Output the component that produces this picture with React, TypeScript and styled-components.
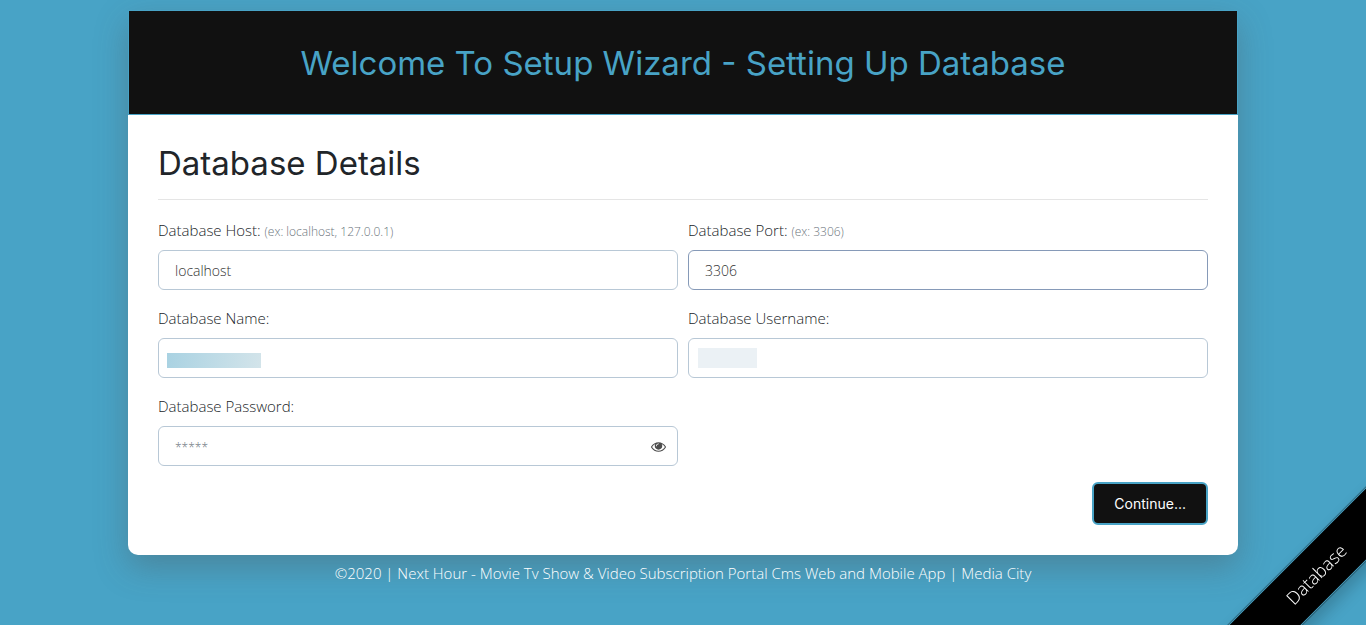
import React, { useState } from "react";
import styled, { createGlobalStyle } from "styled-components";

const blue = "#48a3c6";
const display = `Inter, "Liberation Sans", sans-serif`;
const body = `"Open Sans", "Noto Sans", sans-serif`;

const Global = createGlobalStyle`
  *, *::before, *::after { box-sizing: border-box; }
  body {
    margin: 0;
    min-height: 100vh;
    background: ${blue};
    color: #212529;
    font: 300 15px/24px ${body};
  }
`;

const Container = styled.div`
  max-width: 1140px;
  margin: 0 auto;
  padding: 10px 15px 32px;
`;

const Card = styled.main`
  background: #fff;
  border-radius: 10px;
  box-shadow: 0 12px 32px rgba(77, 77, 77, 0.35);
`;

const Header = styled.header`
  padding: 32px 20px 31px;
  background: #111;
  border: 1px solid ${blue};
  text-align: center;
`;

const Title = styled.h1`
  margin: 0;
  color: ${blue};
  font: 400 33px/40px ${display};
`;

const Form = styled.form`
  padding: 28px 30px 30px;
`;

const SectionTitle = styled.h2`
  margin: 0 0 16px;
  font: 400 33px/40px ${display};
`;

const Rule = styled.hr`
  margin: 0 0 18px;
  border: 0;
  border-top: 1px solid rgba(0, 0, 0, 0.1);
`;

const Fields = styled.div`
  display: grid;
  grid-template-columns: 1fr 1fr;
  gap: 16px 10px;
`;

const Field = styled.div`
  display: flex;
  flex-direction: column;
  gap: 8px;
`;

const Label = styled.label`
  height: 24px;

  small {
    color: #6c757d;
    font-size: 12px;
  }
`;

const Control = styled.div`
  display: flex;
  position: relative;
`;

const Input = styled.input<{ $active?: boolean }>`
  width: 100%;
  height: 40px;
  padding: 0 16px;
  border: 1px solid ${(p) => (p.$active ? "#869ab8" : "#b8c8d6")};
  border-radius: 6px;
  background: #fff;
  color: #333;
  font: 300 14px/24px ${body};
  outline: 0;
  &::placeholder { color: #6c757d; font-size: 12px; opacity: 1; }
`;

const Redaction = styled.span<{ $tone: "blue" | "grey" }>`
  position: absolute;
  top: ${(p) => (p.$tone === "blue" ? 15 : 10)}px;
  left: ${(p) => (p.$tone === "blue" ? 9 : 10)}px;
  width: ${(p) => (p.$tone === "blue" ? 94 : 59)}px;
  height: ${(p) => (p.$tone === "blue" ? 15 : 20)}px;
  background: ${(p) => (p.$tone === "blue" ? "linear-gradient(100deg, #a9d2e2, #d3e4ea)" : "#ebf1f5")};
`;

const Reveal = styled.button`
  position: absolute;
  top: 8px;
  right: 8px;
  display: grid;
  place-items: center;
  width: 24px;
  height: 24px;
  padding: 0;
  border: 0;
  background: none;
  color: #4d4d4d;
  cursor: pointer;
`;

const Actions = styled.div`
  display: flex;
  justify-content: flex-end;
  margin-top: 16px;
`;

const Submit = styled.button`
  padding: 8px 20px;
  border: 2px solid ${blue};
  border-radius: 6px;
  background: #111;
  color: #fff;
  font: 400 14px/23px ${display};
  cursor: pointer;
`;

const Footer = styled.footer`
  padding-top: 6px;
  color: #fff;
  text-align: center;
`;

const RibbonCorner = styled.aside`
  position: fixed;
  right: 0;
  bottom: 0;
  display: grid;
  place-items: center;
  place-content: center;
  width: 100px;
  height: 102px;
`;

const Ribbon = styled.div`
  width: 260px;
  background: #000;
  border: 1px solid ${blue};
  box-shadow: 0 0 0 1px rgba(0, 0, 0, 0.2), 0 8px 16px rgba(0, 0, 0, 0.2);
  color: #fff;
  font-size: 18px;
  line-height: 50px;
  text-align: center;
  transform: rotate(-45deg);
`;

const EyeIcon = () => (
  <svg width="15" height="15" viewBox="0 0 1792 1792" fill="currentColor" aria-hidden="true">
    <path d="M1664 960q-152-236-381-353 61 104 61 225 0 185-131.5 316.5t-316.5 131.5-316.5-131.5-131.5-316.5q0-121 61-225-229 117-381 353 133 205 333.5 326.5t434.5 121.5 434.5-121.5 333.5-326.5zm-720-384q0-20-14-34t-34-14q-125 0-214.5 89.5t-89.5 214.5q0 20 14 34t34 14 34-14 14-34q0-86 61-147t147-61q20 0 34-14t14-34zm848 384q0 34-20 69-140 230-376.5 368.5t-499.5 138.5-499.5-139-376.5-368q-20-35-20-69t20-69q140-229 376.5-368t499.5-139 499.5 139 376.5 368q20 35 20 69z" />
  </svg>
);

export default function App() {
  const [shown, setShown] = useState(false);
  return (
    <>
      <Global />
      <Container>
        <Card>
          <Header>
            <Title>Welcome To Setup Wizard - Setting Up Database</Title>
          </Header>
          <Form onSubmit={(e) => e.preventDefault()}>
            <SectionTitle>Database Details</SectionTitle>
            <Rule />
            <Fields>
              <Field>
                <Label htmlFor="host">Database Host: <small>(ex: localhost, 127.0.0.1)</small></Label>
                <Control><Input id="host" defaultValue="localhost" /></Control>
              </Field>
              <Field>
                <Label htmlFor="port">Database Port: <small>(ex: 3306)</small></Label>
                <Control><Input id="port" defaultValue="3306" $active /></Control>
              </Field>
              <Field>
                <Label htmlFor="name">Database Name:</Label>
                <Control><Input id="name" /><Redaction $tone="blue" /></Control>
              </Field>
              <Field>
                <Label htmlFor="user">Database Username:</Label>
                <Control><Input id="user" /><Redaction $tone="grey" /></Control>
              </Field>
              <Field>
                <Label htmlFor="password">Database Password:</Label>
                <Control>
                  <Input id="password" type={shown ? "text" : "password"} placeholder="*****" />
                  <Reveal type="button" aria-label="Show password" onClick={() => setShown(!shown)}>
                    <EyeIcon />
                  </Reveal>
                </Control>
              </Field>
            </Fields>
            <Actions><Submit type="submit">Continue...</Submit></Actions>
          </Form>
        </Card>
        <Footer>©2020 | Next Hour - Movie Tv Show &amp; Video Subscription Portal Cms Web and Mobile App | Media City</Footer>
      </Container>
      <RibbonCorner><Ribbon>Database</Ribbon></RibbonCorner>
    </>
  );
}
